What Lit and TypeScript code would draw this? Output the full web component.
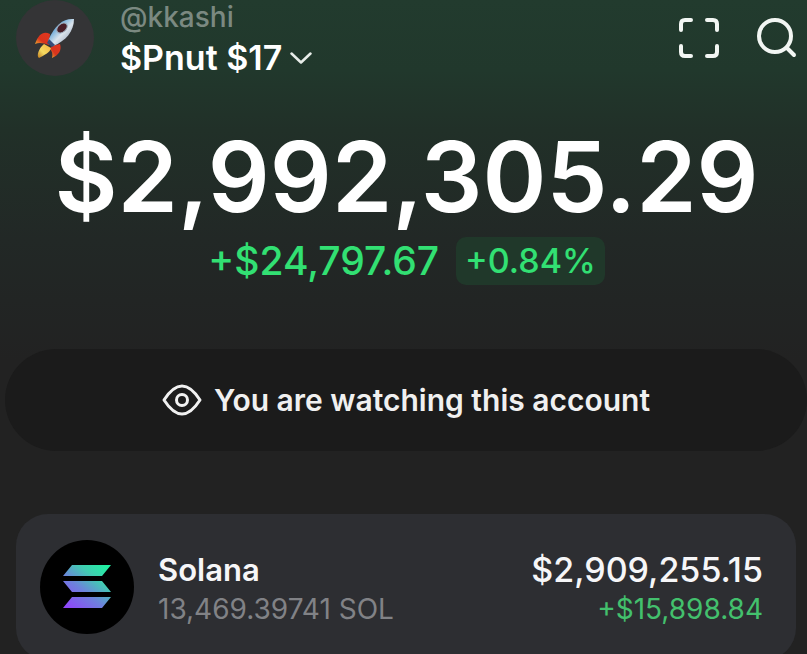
import { LitElement, html, css, svg } from "lit";
import { customElement, property } from "lit/decorators.js";

const rocket = svg`
  <defs>
    <linearGradient id="hull" x1="0" y1="0" x2="1" y2="1">
      <stop offset="0" stop-color="#3f93cf" />
      <stop offset="0.35" stop-color="#7fb4dc" />
      <stop offset="0.55" stop-color="#dbe4ec" />
      <stop offset="1" stop-color="#7d8aa6" />
    </linearGradient>
    <linearGradient id="flame" x1="1" y1="0" x2="0" y2="1">
      <stop offset="0" stop-color="#f8b13c" />
      <stop offset="0.6" stop-color="#f4da62" />
      <stop offset="1" stop-color="#c07a1c" />
    </linearGradient>
    <linearGradient id="fin" x1="1" y1="0" x2="0" y2="1">
      <stop offset="0" stop-color="#e2371f" />
      <stop offset="0.6" stop-color="#d9341d" />
      <stop offset="1" stop-color="#efb631" />
    </linearGradient>
  </defs>
  <path d="M15 16 C9 13 4 15 0 26 C4 24 9 25 14 27 Z" fill="url(#fin)" />
  <path d="M17 28 L25 26 C27 32 24 37 17 40 C18 36 17 33 15 31 Z" fill="url(#fin)" />
  <path d="M9 26 L16 30 C15 35 9 37 4 40 C1 38 4 30 9 26 Z" fill="url(#flame)" />
  <path d="M39 1 C29 0 20 6 13 23 L18 28 C31 23 39 13 39 1 Z" fill="url(#hull)" />
  <path d="M14 21 L20 27 L17 29 L12 25 Z" fill="#394c78" />
  <ellipse cx="27" cy="10" rx="6" ry="4" transform="rotate(-40 27 10)" fill="#481f28" stroke="#9eacbb" />
`;

@customElement("asset-row")
class AssetRow extends LitElement {
  @property() name = "";
  @property() amount = "";
  @property() value = "";
  @property() change = "";

  static styles = css`
    :host { display: block; }
    .card {
      display: flex;
      align-items: center;
      gap: 24px;
      padding: 26px 33px 26px 24px;
      border-radius: 32px;
      background: #2d2e32;
    }
    .logo { width: 94px; height: 94px; flex: none; display: block; }
    .texts { flex: 1; display: flex; flex-direction: column; padding-top: 4px; }
    .end { align-items: flex-end; }
    .main { font-size: 34px; line-height: 40px; font-weight: 500; color: #f6f6f8; }
    .name { font-size: 31px; font-weight: 600; }
    .sub { font-size: 28px; line-height: 38px; color: #818286; }
    .gain { color: #43c06d; }
  `;

  render() {
    return html`
      <article class="card">
        <svg class="logo" viewBox="0 0 94 94" aria-hidden="true">
          <defs>
            <linearGradient id="sol" gradientUnits="userSpaceOnUse" x1="66" y1="24" x2="30" y2="70">
              <stop offset="0" stop-color="#1df5a0" />
              <stop offset="0.3" stop-color="#42cbb2" />
              <stop offset="0.6" stop-color="#6d82dc" />
              <stop offset="1" stop-color="#9045fc" />
            </linearGradient>
          </defs>
          <circle cx="47" cy="47" r="47" fill="#000" />
          <path
            fill="url(#sol)"
            d="M32 25 H71 L62 36 H23 Z M23 41 H62 L71 52 H32 Z M32 57 H71 L62 68 H23 Z"
          />
        </svg>
        <div class="texts">
          <span class="main name">${this.name}</span>
          <span class="sub">${this.amount}</span>
        </div>
        <div class="texts end">
          <span class="main">${this.value}</span>
          <span class="sub gain">${this.change}</span>
        </div>
      </article>
    `;
  }
}

@customElement("app-root")
class AppRoot extends LitElement {
  static styles = css`
    :host {
      display: block;
      min-height: 100vh;
      font-family: Inter, "Liberation Sans", sans-serif;
      color: #fff;
      background: #222 linear-gradient(#223b2e 0, #21382c 70px, #213028 130px, #222826 240px, #222 360px) no-repeat;
    }
    button { font: inherit; color: inherit; background: none; border: 0; padding: 0; cursor: pointer; }
    svg { display: block; fill: none; }
    .bar { display: flex; align-items: flex-start; padding: 0 10px 0 16px; }
    .avatar {
      width: 78px;
      height: 76px;
      border-radius: 50%;
      background: #343436;
      display: grid;
      place-items: center;
    }
    .who { flex: 1; margin-left: 26px; display: flex; flex-direction: column; align-items: flex-start; }
    .handle { font-size: 28px; line-height: 34px; font-weight: 500; color: #7b8981; }
    .account { display: flex; align-items: center; gap: 8px; font-size: 34px; line-height: 48px; font-weight: 600; }
    .tools { display: flex; align-items: center; gap: 38px; height: 76px; }
    .balance { text-align: center; padding: 35px 0 0 6px; }
    .total { margin: 0; font-size: 97px; line-height: 120px; font-weight: 600; }
    .delta {
      margin: 0;
      display: flex;
      justify-content: center;
      align-items: center;
      gap: 17px;
      font-size: 39px;
      line-height: 48px;
      font-weight: 500;
      color: #32e073;
    }
    .pct { padding: 0 9px; border-radius: 10px; background: #20382a; font-size: 34px; }
    .notice {
      margin: 64px 0 63px 5px;
      min-height: 102px;
      border-radius: 51px;
      background: #1b1b1b;
      display: flex;
      justify-content: center;
      align-items: center;
      gap: 12px;
      font-size: 30px;
      line-height: 36px;
      font-weight: 600;
      color: #f0f0f0;
    }
    .assets { padding: 0 11px 0 16px; }
  `;

  render() {
    return html`
      <header class="bar">
        <div class="avatar">
          <svg width="40" height="41" viewBox="0 0 40 41" aria-hidden="true">${rocket}</svg>
        </div>
        <div class="who">
          <span class="handle">@kkashi</span>
          <button class="account">
            $Pnut $17
            <svg width="22" height="12" viewBox="0 0 22 12" stroke="#e8ede9" stroke-width="2.5" stroke-linecap="round" stroke-linejoin="round" aria-hidden="true">
              <path d="M1.5 1.5 L11 10.5 L20.5 1.5" />
            </svg>
          </button>
        </div>
        <div class="tools">
          <button aria-label="Scan">
            <svg width="40" height="40" viewBox="0 0 40 40" stroke="#f2f6f3" stroke-width="4" stroke-linecap="round">
              <path d="M12 2 H6 Q2 2 2 6 V12 M28 2 H34 Q38 2 38 6 V12 M38 28 V34 Q38 38 34 38 H28 M12 38 H6 Q2 38 2 34 V28" />
            </svg>
          </button>
          <button aria-label="Search">
            <svg width="40" height="40" viewBox="0 0 40 40" stroke="#f2f6f3" stroke-width="4" stroke-linecap="round">
              <circle cx="18" cy="18" r="16" />
              <path d="M30 30 L37 37" />
            </svg>
          </button>
        </div>
      </header>
      <section class="balance">
        <h1 class="total">$2,992,305.29</h1>
        <p class="delta"><span>+$24,797.67</span><span class="pct">+0.84%</span></p>
      </section>
      <div class="notice">
        <svg width="40" height="32" viewBox="0 0 40 32" stroke="#f0f0f0" stroke-width="3" stroke-linejoin="round" aria-hidden="true">
          <path d="M2 16 Q11 2 20 2 Q29 2 38 16 Q29 30 20 30 Q11 30 2 16 Z" />
          <circle cx="20" cy="16" r="5.5" />
        </svg>
        <span>You are watching this account</span>
      </div>
      <main class="assets">
        <asset-row name="Solana" amount="13,469.39741 SOL" value="$2,909,255.15" change="+$15,898.84"></asset-row>
      </main>
    `;
  }
}
